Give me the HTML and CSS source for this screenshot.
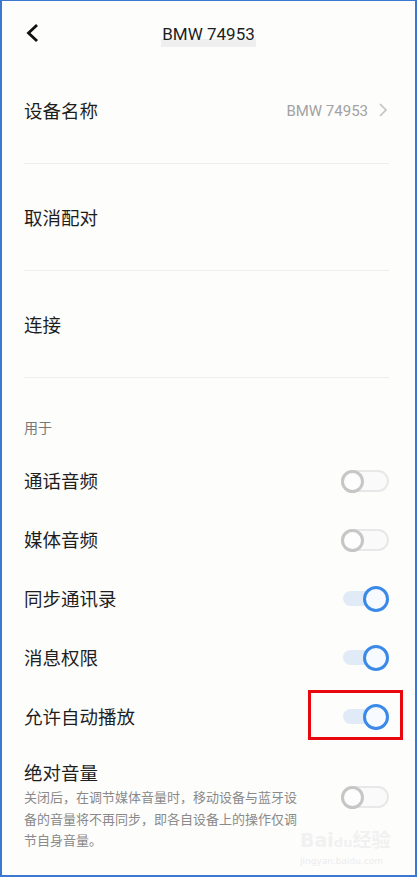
FILE: index.html
```html
<!DOCTYPE html>
<html lang="zh-CN">
<head>
    <meta charset="UTF-8">
    <meta name="viewport" content="width=device-width, initial-scale=1.0">
    <title>BMW 74953</title>
    <link rel="stylesheet" href="styles.css">
</head>
<body>
    <div class="screen">
        <div class="topbar">
            <svg class="back" width="14" height="18" viewBox="0 0 14 18">
                <polyline points="11,2 3.5,9 11,16" fill="none" stroke="#111" stroke-width="2.8" stroke-linecap="square"/>
            </svg>
            <span class="title">BMW 74953</span>
        </div>

        <div class="row">
            <span class="label">设备名称</span>
            <span class="value">BMW 74953</span>
            <svg class="arrow" width="10" height="16" viewBox="0 0 10 16">
                <polyline points="2,2 8,8 2,14" fill="none" stroke="#c2c2c2" stroke-width="1.6"/>
            </svg>
        </div>
        <div class="row"><span class="label">取消配对</span></div>
        <div class="row"><span class="label">连接</span></div>

        <div class="section">用于</div>

        <div class="switch-row">
            <span class="label">通话音频</span>
            <span class="toggle"></span>
        </div>
        <div class="switch-row">
            <span class="label">媒体音频</span>
            <span class="toggle"></span>
        </div>
        <div class="switch-row">
            <span class="label">同步通讯录</span>
            <span class="toggle on"></span>
        </div>
        <div class="switch-row">
            <span class="label">消息权限</span>
            <span class="toggle on"></span>
        </div>
        <div class="switch-row marked">
            <span class="label">允许自动播放</span>
            <span class="toggle on"></span>
            <div class="mark"></div>
        </div>

        <div class="switch-row tall">
            <div class="text">
                <div class="label">绝对音量</div>
                <p class="desc">关闭后，在调节媒体音量时，移动设备与蓝牙设备的音量将不再同步，即各自设备上的操作仅调节自身音量。</p>
            </div>
            <span class="toggle"></span>
        </div>

        <div class="watermark">
            <div class="wm-logo">Bai<span class="wm-du">du</span>经验</div>
            <div class="wm-url">jingyan.baidu.com</div>
        </div>
    </div>
</body>
</html>
```

FILE: styles.css
```css
body {
    margin: 0;
    background-color: #fdfdfc;
    font-family: Roboto, "Noto Sans CJK SC", sans-serif;
    color: #1e1e1e;
}
.screen {
    width: 417px;
    height: 877px;
    box-sizing: border-box;
    border: 1px solid #3c78d0;
    border-width: 1px 2px 2px 2px;
    position: relative;
    overflow: hidden;
}
.topbar {
    height: 56px;
    position: relative;
    display: flex;
    justify-content: center;
    padding-top: 21px;
    box-sizing: border-box;
}
.back {
    position: absolute;
    left: 23px;
    top: 23px;
}
.title {
    font-size: 17px;
    line-height: 24px;
    height: 25px;
    padding: 0 1px;
    background: linear-gradient(to bottom, transparent 70%, #efefef 70%);
}
.row {
    height: 106px;
    margin: 0 26px 0 22px;
    border-bottom: 1px solid #eeeeee;
    display: flex;
    align-items: center;
}
.label {
    font-size: 18.5px;
    line-height: 26px;
    padding-top: 3px;
}
.value {
    margin-left: auto;
    font-size: 15px;
    color: #a2a2a2;
    margin-right: 10px;
    padding-top: 2px;
}
.arrow {
    margin-right: 1px;
}
.section {
    margin: 40px 0 13px 22px;
    font-size: 14px;
    line-height: 20px;
    color: #777;
}
.switch-row {
    height: 59px;
    margin: 0 26px 0 22px;
    display: flex;
    align-items: center;
    justify-content: space-between;
    position: relative;
}
.toggle {
    width: 48px;
    height: 22px;
    box-sizing: border-box;
    border: 2px solid #e8e8e8;
    border-radius: 11px;
    background-color: #fafafa;
    position: relative;
}
.toggle::after {
    content: "";
    position: absolute;
    left: -2px;
    top: -2px;
    width: 23px;
    height: 23px;
    box-sizing: border-box;
    border: 3px solid #c6c6c6;
    border-radius: 50%;
    background-color: #fdfdfd;
}
.toggle.on {
    width: 46px;
    height: 15px;
    border: none;
    border-radius: 8px;
    background-color: #e1ebf8;
}
.toggle.on::after {
    left: 20px;
    top: -5.5px;
    width: 26px;
    height: 26px;
    border-color: #3b8ae8;
    background-color: #f7faff;
}
.mark {
    position: absolute;
    left: 284px;
    top: 3px;
    width: 95px;
    height: 50px;
    box-sizing: border-box;
    border: 3px solid #e8080d;
}
.switch-row.tall {
    height: auto;
    align-items: flex-start;
    padding-top: 12px;
}
.switch-row.tall .toggle {
    margin-top: 28px;
}
.desc {
    margin: 0;
    width: 280px;
    font-size: 13px;
    line-height: 21.5px;
    color: #8a8a8a;
}
.watermark {
    position: absolute;
    left: 298px;
    top: 828px;
    color: #f1f1f1;
    font-family: "DejaVu Sans", "Noto Sans CJK SC", sans-serif;
}
.wm-logo {
    font-size: 19px;
    font-weight: bold;
    line-height: 22px;
}
.wm-du {
    font-size: 13px;
}
.wm-url {
    font-size: 9px;
    line-height: 14px;
    color: #ececec;
}
```
